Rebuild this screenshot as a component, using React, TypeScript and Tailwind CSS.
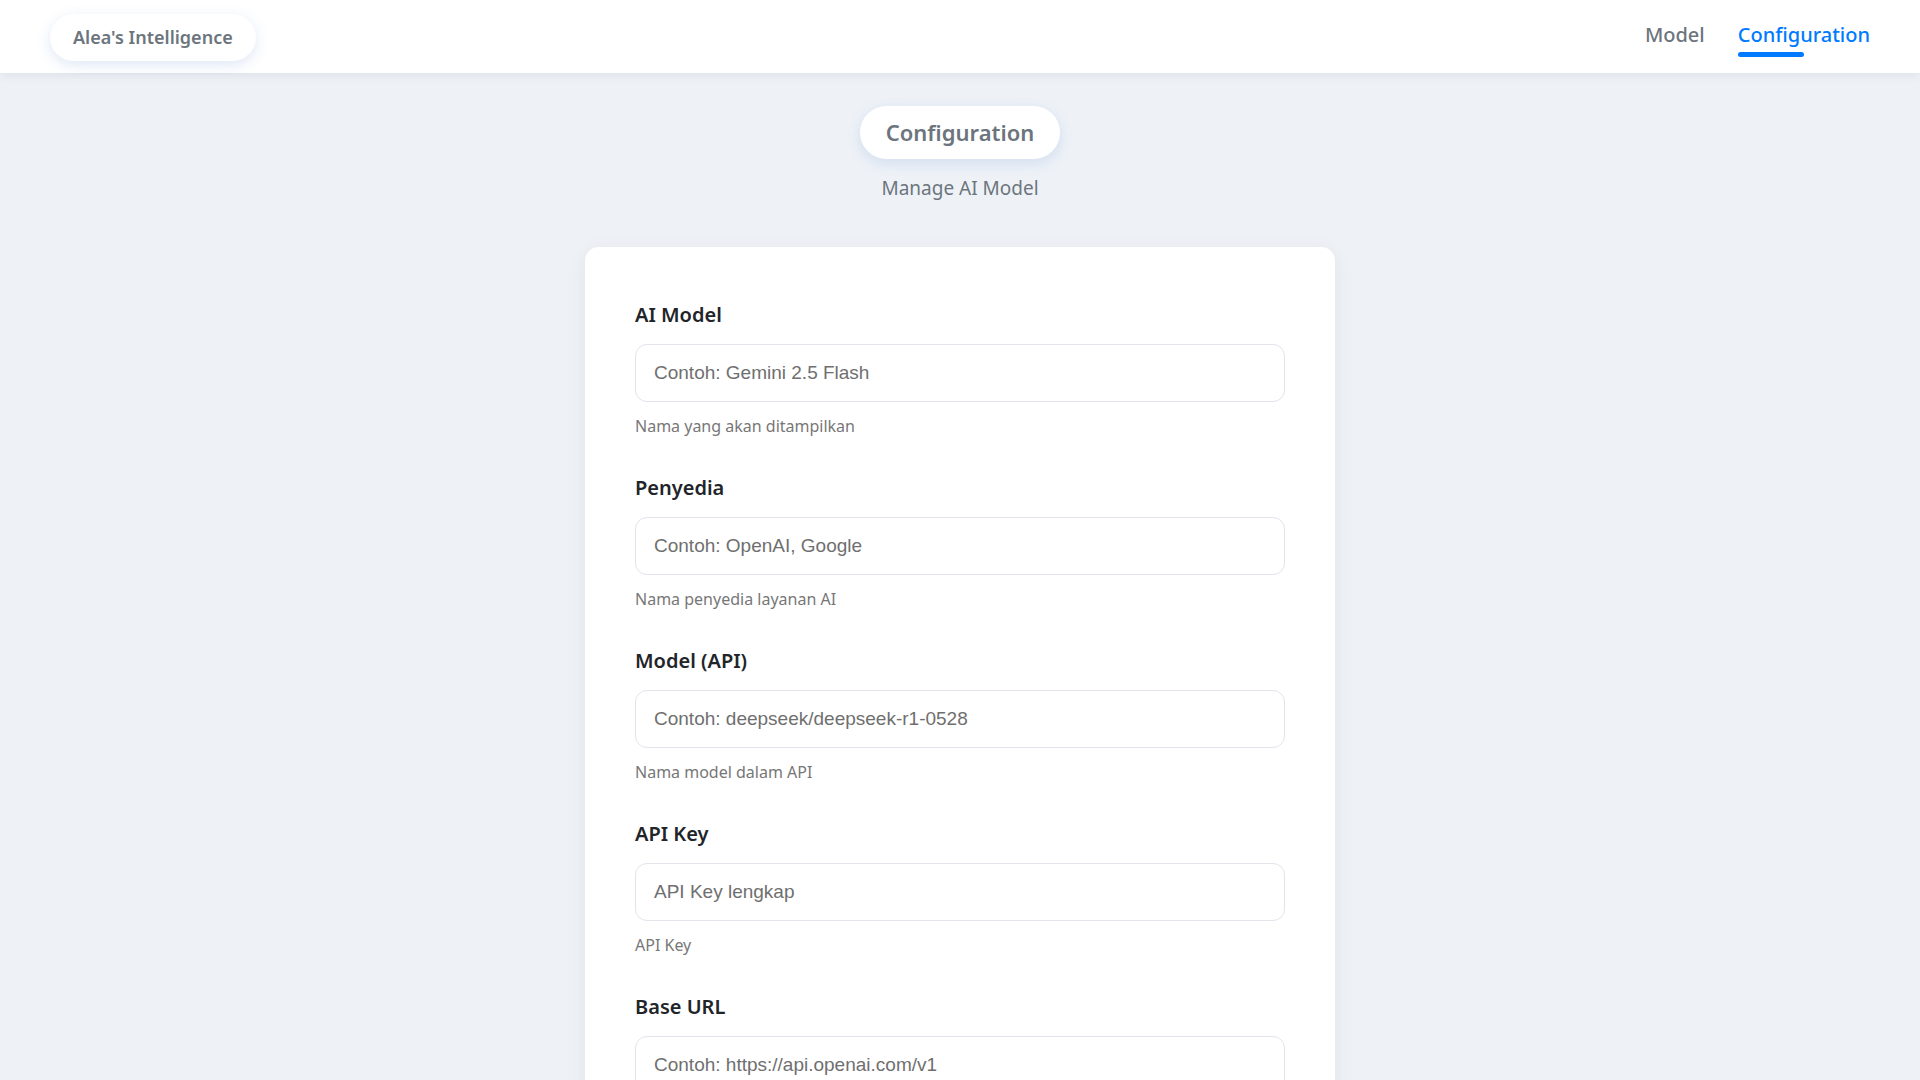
import React from "react";

const fields = [
  { label: "AI Model", placeholder: "Contoh: Gemini 2.5 Flash", help: "Nama yang akan ditampilkan" },
  { label: "Penyedia", placeholder: "Contoh: OpenAI, Google", help: "Nama penyedia layanan AI" },
  { label: "Model (API)", placeholder: "Contoh: deepseek/deepseek-r1-0528", help: "Nama model dalam API" },
  { label: "API Key", placeholder: "API Key lengkap", help: "API Key" },
  { label: "Base URL", placeholder: "Contoh: https://api.openai.com/v1", help: "URL dasar API" },
];

const Header = () => (
  <header className="relative z-10 h-[73px] bg-white px-[50px] flex items-center justify-between shadow-[0_2px_10px_rgba(15,23,42,0.08)]">
    <div className="mt-[2px] h-[47px] px-[23px] flex items-center rounded-full bg-white shadow-[0_4px_14px_rgba(59,110,200,0.16)]">
      <span className="text-[18px] font-semibold text-[#6c757d]">Alea's Intelligence</span>
    </div>
    <nav className="flex gap-[33px] self-stretch pt-[20px]">
      <a className="text-[20px] font-medium text-[#6c757d] leading-[30px]">Model</a>
      <a className="relative text-[20px] font-medium text-[#007bff] leading-[30px]">
        Configuration
        {/* active tab marker */}
        <span className="absolute left-0 top-[32px] h-[5px] w-1/2 rounded-full bg-[#007bff]" />
      </a>
    </nav>
  </header>
);

const Field = ({ label, placeholder, help }: { label: string; placeholder: string; help: string }) => (
  <div className="flex flex-col">
    <label className="text-[20px] font-semibold leading-[30px] text-[#212529]">{label}</label>
    <input
      type="text"
      placeholder={placeholder}
      className="mt-[14px] h-[58px] w-full rounded-xl border border-[#e1e4ea] bg-white px-[18px] text-[19px] text-[#212529] outline-none placeholder:text-[#6f6f6f]"
      style={{ fontFamily: '"Liberation Sans", Arial, sans-serif' }}
    />
    <span className="mt-[12px] text-[16px] leading-6 text-[#777777]">{help}</span>
  </div>
);

export default function App() {
  return (
    <div className="min-h-screen bg-[#eef2f7]" style={{ fontFamily: '"Noto Sans", "Open Sans", sans-serif' }}>
      <Header />
      <main className="flex flex-col items-center pb-16">
        <div className="mt-[33px] h-[53px] px-[26px] flex items-center rounded-full bg-white shadow-[0_4px_14px_rgba(59,110,200,0.15)]">
          <h1 className="text-[22px] font-semibold text-[#6c757d]">Configuration</h1>
        </div>
        <p className="mt-[15px] text-[19px] leading-7 text-[#6c757d]">Manage AI Model</p>
        <section className="mt-[45px] w-[750px] rounded-[14px] bg-white px-[50px] pt-[53px] pb-[50px] shadow-[0_4px_20px_rgba(15,23,42,0.06)]">
          <div className="flex flex-col gap-[35px]">
            {fields.map((f) => (
              <Field key={f.label} {...f} />
            ))}
          </div>
        </section>
      </main>
    </div>
  );
}
